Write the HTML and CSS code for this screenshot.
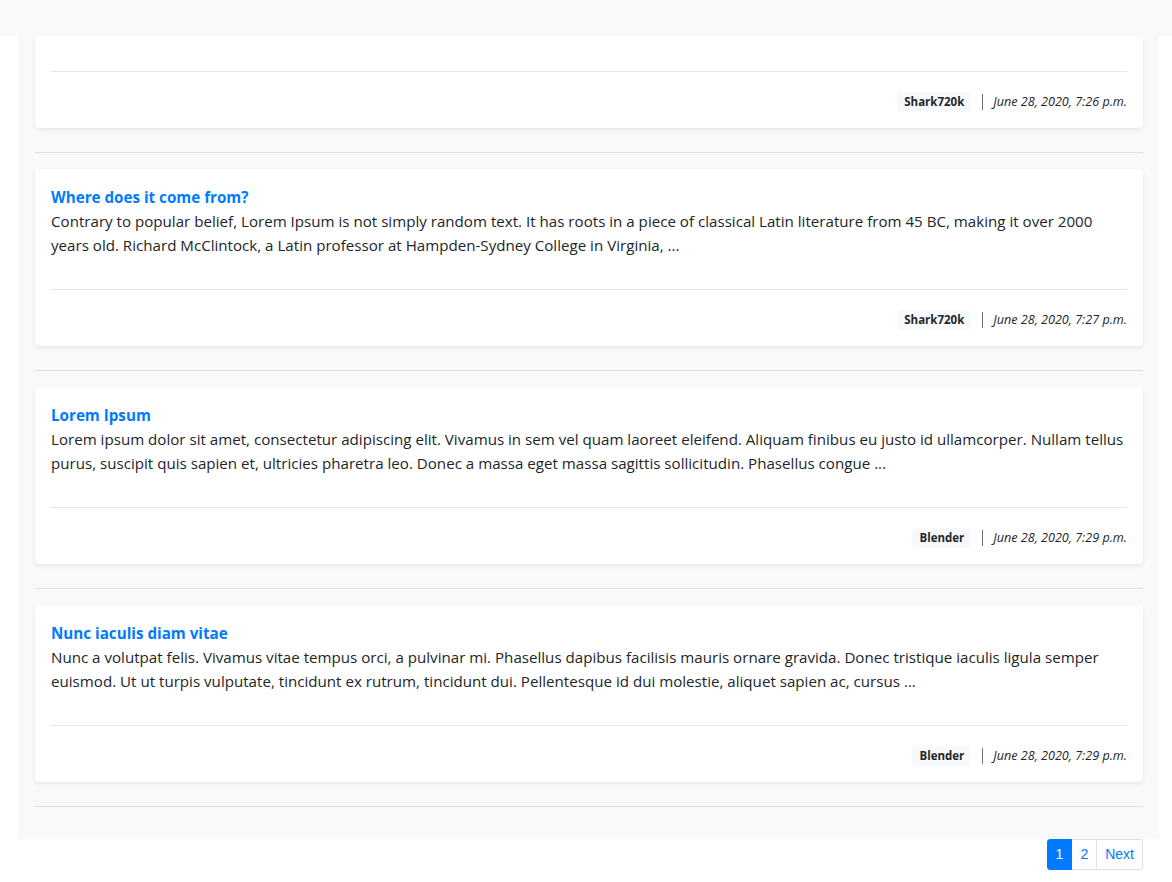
FILE: index.html
```html
<!DOCTYPE html>
<html lang="en">
<head>
<meta charset="utf-8">
<title>Posts</title>
<link rel="stylesheet" href="styles.css">
</head>
<body>
<div class="navbar"></div>
<main class="container">
  <article class="card card-partial">
    <div class="card-body">
      <hr class="inner">
      <div class="meta">
        <span class="badge">Shark720k</span>
        <span class="sep"></span>
        <em class="date">June 28, 2020, 7:26 p.m.</em>
      </div>
    </div>
  </article>
  <hr class="sep-line">

  <article class="card">
    <div class="card-body">
      <a class="title" href="#">Where does it come from?</a>
      <p class="text">Contrary to popular belief, Lorem Ipsum is not simply random text. It has roots in a piece of classical Latin literature from 45 BC, making it over 2000 years old. Richard McClintock, a Latin professor at Hampden-Sydney College in Virginia, ...</p>
      <hr class="inner">
      <div class="meta">
        <span class="badge">Shark720k</span>
        <span class="sep"></span>
        <em class="date">June 28, 2020, 7:27 p.m.</em>
      </div>
    </div>
  </article>
  <hr class="sep-line">

  <article class="card">
    <div class="card-body">
      <a class="title" href="#">Lorem Ipsum</a>
      <p class="text">Lorem ipsum dolor sit amet, consectetur adipiscing elit. Vivamus in sem vel quam laoreet eleifend. Aliquam finibus eu justo id ullamcorper. Nullam tellus purus, suscipit quis sapien et, ultricies pharetra leo. Donec a massa eget massa sagittis sollicitudin. Phasellus congue ...</p>
      <hr class="inner">
      <div class="meta">
        <span class="badge">Blender</span>
        <span class="sep"></span>
        <em class="date">June 28, 2020, 7:29 p.m.</em>
      </div>
    </div>
  </article>
  <hr class="sep-line">

  <article class="card">
    <div class="card-body">
      <a class="title" href="#">Nunc iaculis diam vitae</a>
      <p class="text">Nunc a volutpat felis. Vivamus vitae tempus orci, a pulvinar mi. Phasellus dapibus facilisis mauris ornare gravida. Donec tristique iaculis ligula semper euismod. Ut ut turpis vulputate, tincidunt ex rutrum, tincidunt dui. Pellentesque id dui molestie, aliquet sapien ac, cursus ...</p>
      <hr class="inner">
      <div class="meta">
        <span class="badge">Blender</span>
        <span class="sep"></span>
        <em class="date">June 28, 2020, 7:29 p.m.</em>
      </div>
    </div>
  </article>
  <hr class="sep-line">
</main>
<nav class="pager-wrap">
  <ul class="pagination">
    <li class="page-item active"><a href="#">1</a></li>
    <li class="page-item"><a href="#">2</a></li>
    <li class="page-item"><a href="#">Next</a></li>
  </ul>
</nav>
</body>
</html>
```

FILE: styles.css
```css
* { box-sizing: border-box; }

body {
  margin: 0;
  background: #ffffff;
  font-family: "Segoe UI", "Open Sans", "Noto Sans", sans-serif;
  font-size: 15.13px;
  line-height: 24px;
  color: #212529;
}

.navbar {
  height: 36px;
  background: #f8f9fa;
}

.container {
  margin-left: 19px;
  width: 1140px;
  background: #f8f9fa;
  padding: 0 16px 16px;
  box-shadow: inset 1px 0 0 #f1f2f4;
}

.card {
  background: #ffffff;
  border-radius: 4px;
  box-shadow: 0 2px 4px rgba(0, 0, 0, 0.075);
}

.card-partial {
  border-top-left-radius: 0;
  border-top-right-radius: 0;
}

.card-body {
  padding: 16px;
  display: flex;
  flex-direction: column;
}

.card-partial .card-body {
  padding-top: 19px;
}

.title {
  font-size: 15.2px;
  font-weight: 700;
  color: #007bff;
  text-decoration: none;
  line-height: 24px;
  align-self: flex-start;
}

.text {
  margin: 0 0 16px;
}

hr.inner {
  width: 100%;
  margin: 16px 0;
  border: 0;
  border-top: 1px solid rgba(0, 0, 0, 0.1);
}

.meta {
  display: flex;
  justify-content: flex-end;
  align-items: center;
  height: 24px;
  padding-top: 4px;
}

.badge {
  font-size: 11.5px;
  font-weight: 700;
  line-height: 1;
  padding: 4px 7px;
  background: #f8f9fa;
  border-radius: 4px;
  color: #212529;
}

.sep {
  width: 1px;
  height: 16px;
  background: #6c757d;
  margin: 0 10px 0 11px;
}

.date {
  font-size: 12.6px;
  font-style: italic;
  color: #212529;
}

hr.sep-line {
  margin: 24px 0 16px;
  border: 0;
  border-top: 1px solid rgba(0, 0, 0, 0.1);
}

.pager-wrap {
  margin-left: 19px;
  width: 1140px;
  padding: 0 16px;
  display: flex;
  justify-content: flex-end;
}

.pagination {
  list-style: none;
  margin: 0;
  padding: 0;
  display: flex;
}

.page-item a {
  display: block;
  font-family: "Liberation Sans", Arial, sans-serif;
  font-size: 14px;
  line-height: 21px;
  padding: 4px 8px;
  color: #007bff;
  background: #ffffff;
  border: 1px solid #dee2e6;
  margin-left: -1px;
  text-decoration: none;
}

.page-item:first-child a {
  margin-left: 0;
  border-radius: 3px 0 0 3px;
}

.page-item:last-child a {
  border-radius: 0 3px 3px 0;
}

.page-item.active a {
  color: #ffffff;
  background: #007bff;
  border-color: #007bff;
  position: relative;
  z-index: 1;
}
```
